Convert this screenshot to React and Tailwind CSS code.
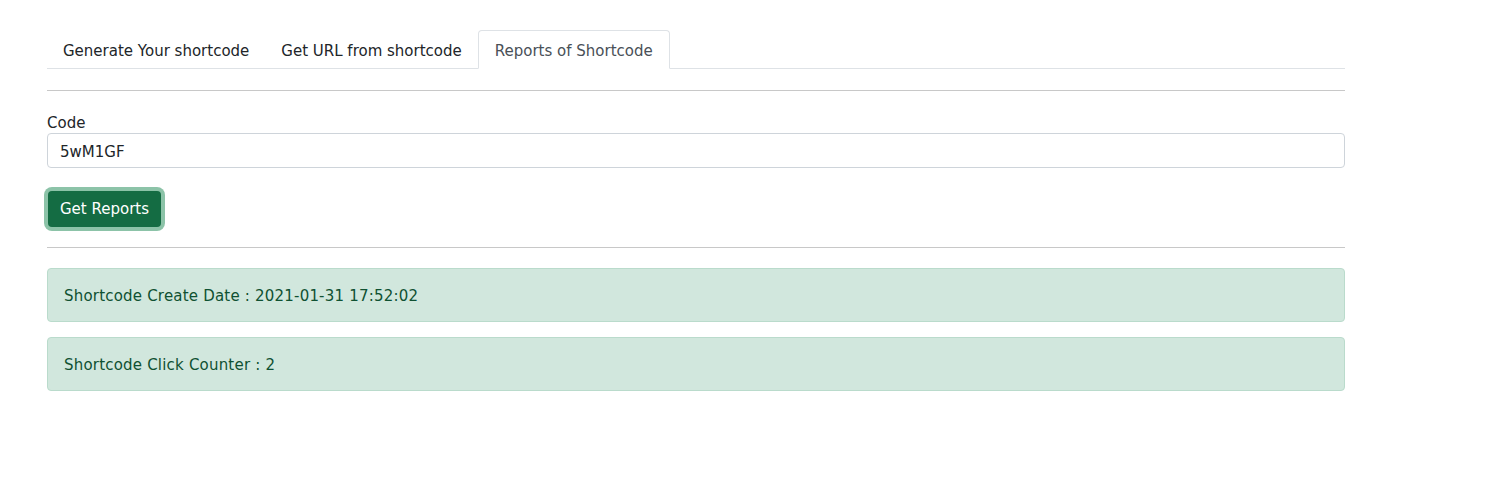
export default function App() {
  return (
    <div className="min-h-screen bg-white text-[#212529] text-[15px]" style={{ fontFamily: '"DejaVu Sans", Verdana, sans-serif' }}>
      <div className="w-[1298px] ml-[47px] pt-[30px]">
        <div className="flex border-b border-[#dee2e6] h-[39px]">
          <button className="px-4 h-[38px] pt-[4px] text-[#212529]">Generate Your shortcode</button>
          <button className="px-4 h-[38px] pt-[4px] text-[#212529]">Get URL from shortcode</button>
          <button className="px-4 h-[39px] pt-[3px] text-[#495057] bg-white border border-[#dee2e6] border-b-white rounded-t">Reports of Shortcode</button>
        </div>

        <hr className="mt-[21px] border-t border-[#c8c8c8]" />

        <div className="mt-[21px]">
          <label className="block leading-[20px] pt-[1px]">Code</label>
          <input
            readOnly
            value="5wM1GF"
            className="w-full h-[35px] px-3 pt-[2px] border border-[#ced4da] rounded text-[#212529] outline-none"
          />
        </div>

        <button className="mt-[23px] bg-[#146c43] text-white px-3 h-[36px] rounded ring-4 ring-[#8cc3a8] ml-[1px] leading-none">
          Get Reports
        </button>

        <hr className="mt-[20px] border-t border-[#c8c8c8]" />

        <div className="mt-[20px] h-[54px] flex items-center px-4 pt-[2px] bg-[#d1e7dd] border border-[#badbcc] rounded text-[#0f5132] tracking-[0.2px]">
          Shortcode Create Date : 2021-01-31 17:52:02
        </div>
        <div className="mt-[15px] h-[54px] flex items-center px-4 pt-[2px] bg-[#d1e7dd] border border-[#badbcc] rounded text-[#0f5132] tracking-[0.2px]">
          Shortcode Click Counter : 2
        </div>
      </div>
    </div>
  );
}
